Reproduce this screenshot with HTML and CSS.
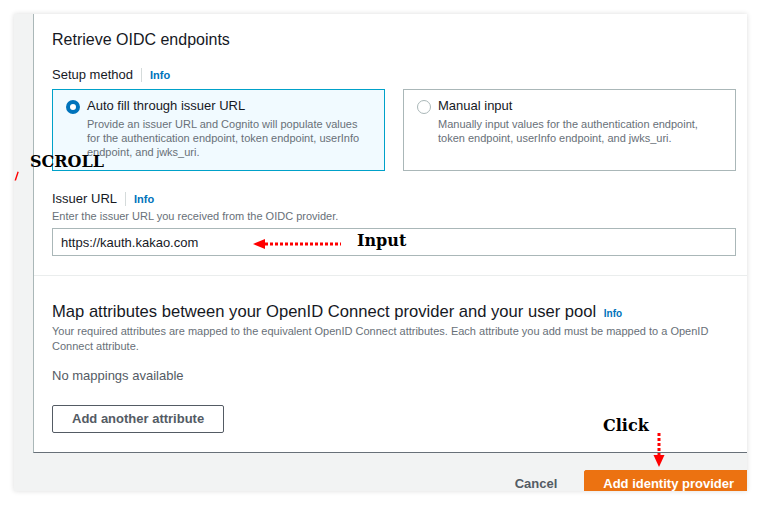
FILE: index.html
```html
<!DOCTYPE html>
<html lang="en">
<head>
<meta charset="utf-8">
<title>Retrieve OIDC endpoints</title>
<link rel="stylesheet" href="styles.css">
</head>
<body>
<div class="stage">
  <div class="frame">
    <div class="panel">
      <section class="sec sec-endpoints">
        <h2 class="sec-title">Retrieve OIDC endpoints</h2>
        <div class="field-label setup"><span>Setup method</span><span class="sep"></span><a class="info">Info</a></div>
        <div class="tiles">
          <div class="tile tile-on">
            <span class="radio radio-on"></span>
            <div class="tile-text">
              <div class="tile-title">Auto fill through issuer URL</div>
              <div class="tile-desc">Provide an issuer URL and Cognito will populate values for the authentication endpoint, token endpoint, userInfo endpoint, and jwks_uri.</div>
            </div>
          </div>
          <div class="tile">
            <span class="radio"></span>
            <div class="tile-text">
              <div class="tile-title">Manual input</div>
              <div class="tile-desc">Manually input values for the authentication endpoint, token endpoint, userInfo endpoint, and jwks_uri.</div>
            </div>
          </div>
        </div>
        <div class="field-label issuer"><span>Issuer URL</span><span class="sep"></span><a class="info">Info</a></div>
        <div class="hint">Enter the issuer URL you received from the OIDC provider.</div>
        <input class="input" type="text" value="https://kauth.kakao.com">
      </section>
      <section class="sec sec-map">
        <h2 class="sec-title map-title">Map attributes between your OpenID Connect provider and your user pool <a class="info info-sm">Info</a></h2>
        <p class="desc">Your required attributes are mapped to the equivalent OpenID Connect attributes. Each attribute you add must be mapped to a OpenID Connect attribute.</p>
        <p class="empty">No mappings available</p>
        <button class="btn-normal" type="button">Add another attribute</button>
      </section>
    </div>
    <div class="footer">
      <button class="btn-link" type="button">Cancel</button>
      <button class="btn-primary" type="button">Add identity provider</button>
    </div>
  </div>

  <svg class="tick" width="6" height="10" viewBox="0 0 6 10"><polygon points="0.5,9.5 3.5,0.5 4.8,1 2,9.5" fill="#ff0000"/></svg>
  <div class="note note-scroll">SCROLL</div>

  <svg class="arrow-input" width="90" height="12" viewBox="0 0 90 12">
    <polygon points="1,6 13,1 13,11" fill="#ff0000"/>
    <line x1="13" y1="6" x2="89" y2="6" stroke="#ff0000" stroke-width="3" stroke-dasharray="3 2"/>
  </svg>
  <div class="note note-input">Input</div>

  <div class="note note-click">Click</div>
  <svg class="arrow-click" width="12" height="35" viewBox="0 0 12 35">
    <line x1="6" y1="0" x2="6" y2="23" stroke="#ff0000" stroke-width="3" stroke-dasharray="3 2"/>
    <polygon points="0.5,22 11.5,22 6,34" fill="#ff0000"/>
  </svg>
</div>
</body>
</html>
```

FILE: styles.css
```css
body {
  margin: 0;
  background: #ffffff;
  font-family: "Liberation Sans", Arial, sans-serif;
  color: #16191f;
}

.stage {
  position: relative;
  width: 762px;
  height: 506px;
  padding: 14px 0 0 14px;
  box-sizing: border-box;
}

.frame {
  width: 733px;
  height: 477px;
  background: #f2f3f3;
  box-shadow: 0 0 5px rgba(0, 0, 0, 0.14);
  display: flex;
  flex-direction: column;
  overflow: hidden;
}

.panel {
  flex: none;
  margin-left: 19px;
  height: 438px;
  background: #ffffff;
  border-left: 1px solid #aab7b8;
  border-bottom: 1px solid #687078;
}

.sec-endpoints {
  padding: 16px 11px 19px 18px;
  border-bottom: 1px solid #eaeded;
}

.sec-title {
  margin: 0;
  font-size: 16px;
  line-height: 20px;
  font-weight: 400;
  color: #16191f;
}

.map-title {
  font-size: 16.6px;
}

.field-label {
  display: flex;
  align-items: center;
  font-size: 13px;
  line-height: 16px;
}

.setup {
  margin-top: 17px;
}

.sep {
  width: 1px;
  height: 14px;
  background: #d5dbdb;
  margin: 0 8px;
}

.info {
  color: #0073bb;
  font-weight: 700;
  font-size: 11px;
}

.tiles {
  margin-top: 6px;
  display: grid;
  grid-template-columns: 1fr 1fr;
  gap: 18px;
  height: 82px;
}

.tile {
  display: flex;
  align-items: flex-start;
  gap: 7px;
  padding: 8px 12px 0 13px;
  border: 1px solid #aab7b8;
  background: #ffffff;
}

.tile-on {
  border-color: #00a1c9;
  background: #f1faff;
}

.radio {
  flex: none;
  width: 14px;
  height: 14px;
  margin-top: 2px;
  box-sizing: border-box;
  border-radius: 50%;
  border: 1px solid #aab7b8;
  background: #ffffff;
}

.radio-on {
  border: 4px solid #0073bb;
}

.tile-title {
  font-size: 13px;
  line-height: 16px;
}

.tile-desc {
  margin-top: 2.5px;
  font-size: 11px;
  line-height: 14.4px;
  color: #687078;
}

.issuer {
  margin-top: 20px;
}

.hint {
  margin-top: 2px;
  font-size: 11px;
  line-height: 14px;
  color: #687078;
}

.input {
  display: block;
  margin: 5px 0 0;
  width: 100%;
  height: 28px;
  box-sizing: border-box;
  border: 1px solid #aab7b8;
  border-radius: 0;
  padding: 0 8px;
  font: 13px "Liberation Sans", Arial, sans-serif;
  color: #16191f;
  background: #ffffff;
  outline: none;
}

.sec-map {
  padding: 26px 11px 0 18px;
}

.info-sm {
  font-size: 10px;
  margin-left: 3px;
}

.desc {
  margin: 0;
  font-size: 11px;
  line-height: 15px;
  color: #687078;
}

.empty {
  margin: 14px 0 0;
  font-size: 13px;
  line-height: 16px;
  color: #545b64;
}

.btn-normal {
  display: block;
  margin-top: 21px;
  height: 28px;
  padding: 0 19px;
  border: 1px solid #545b64;
  border-radius: 2px;
  background: #ffffff;
  color: #545b64;
  font: 700 13px/26px "Liberation Sans", Arial, sans-serif;
}

.footer {
  flex: 1;
  display: flex;
  justify-content: flex-end;
  align-items: flex-start;
  padding-top: 17px;
  margin-right: -6px;
}

.btn-link {
  padding: 3px 20px;
  margin-right: 6px;
  border: 1px solid transparent;
  background: none;
  color: #545b64;
  font: 700 13px/20px "Liberation Sans", Arial, sans-serif;
}

.btn-primary {
  flex: none;
  padding: 3px 18px;
  border: 1px solid #ec7211;
  border-radius: 2px;
  background: #ec7211;
  color: #ffffff;
  white-space: nowrap;
  font: 700 13px/20px "Liberation Sans", Arial, sans-serif;
}

.note {
  position: absolute;
  font: 700 16px/20px "DejaVu Serif", "Liberation Serif", serif;
  color: #000000;
  white-space: nowrap;
}

.note-scroll { left: 30px; top: 152px; }
.note-input { left: 357px; top: 231px; }
.note-click { left: 603px; top: 416px; }

.tick { position: absolute; left: 14px; top: 171px; }
.arrow-input { position: absolute; left: 252px; top: 238px; }
.arrow-click { position: absolute; left: 653px; top: 433px; }
```
